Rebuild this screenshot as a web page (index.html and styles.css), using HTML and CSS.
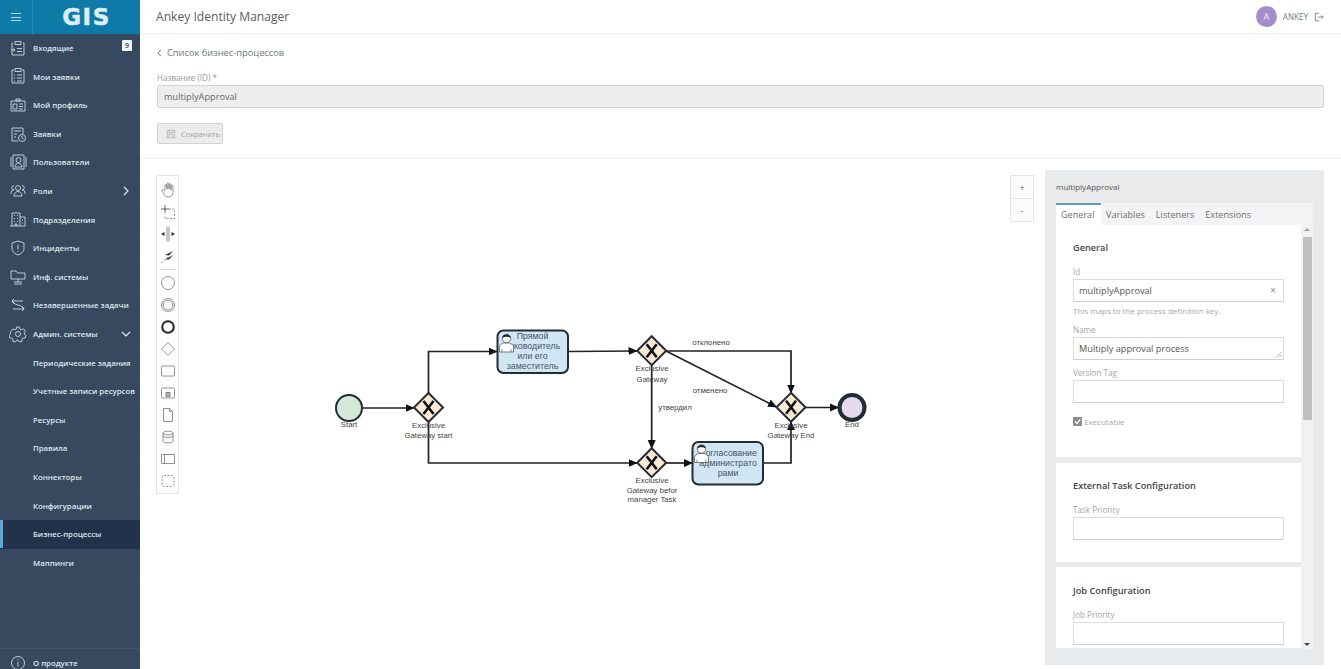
FILE: index.html
```html
<!DOCTYPE html>
<html lang="ru">
<head>
<meta charset="utf-8">
<title>Ankey Identity Manager</title>
<link rel="stylesheet" href="styles.css">
</head>
<body>
<div class="app">
  <aside class="sidebar">
    <div class="brand">
      <div class="burger"><span></span><span></span><span></span></div>
      <div class="logo">GIS</div>
    </div>
    <nav class="nav">
      <a class="item"><svg class="ico" viewBox="0 0 18 18"><path d="M4 4H3v12h12V4h-1M6 2.500h6v3H6zM8 9.500h5M8 12.500h5M2 11h4M4.500 9.500 6 11l-1.500 1.500"/></svg><span>Входящие</span><b class="badge">9</b></a>
      <a class="item"><svg class="ico" viewBox="0 0 18 18"><path d="M5 3H3v13h12V3h-2M6 1.500h6v3H6zM8 8h5M8 11h5M8 14h5M5 8h1M5 11h1M5 14h1"/></svg><span>Мои заявки</span></a>
      <a class="item"><svg class="ico" viewBox="0 0 18 18"><path d="M2 5h14v10H2zM7 3h4v2H7zM4 8h4v5H4zM10 8h4M10 10.500h4M10 13h4"/></svg><span>Мой профиль</span></a>
      <a class="item"><svg class="ico" viewBox="0 0 18 18"><path d="M9 16H3V3h11v6M5 6h7M5 9h3M5 12h2"/><circle cx="13" cy="13" r="3.500"/><path d="M13 11v2l1.500 1"/></svg><span>Заявки</span></a>
      <a class="item"><svg class="ico" viewBox="0 0 18 18"><path d="M4 2h11v14H4zM2 4v10M17 4v10"/><circle cx="9.500" cy="7" r="2.500"/><path d="M6 14c0-5 7-5 7 0z"/></svg><span>Пользователи</span></a>
      <a class="item"><svg class="ico" viewBox="0 0 18 18"><circle cx="9" cy="6" r="2.500"/><path d="M5 14c0-6 8-6 8 0zM5 3.500a2.200 2.200 0 0 0 0 4.500M2 12c0-3 1-4 3-4M13 3.500a2.200 2.200 0 0 1 0 4.500M16 12c0-3-1-4-3-4"/></svg><span>Роли</span><svg class="chev" viewBox="0 0 10 10"><path d="M3 1l4 4-4 4"/></svg></a>
      <a class="item"><svg class="ico" viewBox="0 0 18 18"><path d="M3 16V3h8v13M11 7h5v9H1M5 5.500h1M8 5.500h1M5 8.500h1M8 8.500h1M5 11.500h1M8 11.500h1M6 16v-2h2v2M13 10h1M13 13h1"/></svg><span>Подразделения</span></a>
      <a class="item"><svg class="ico" viewBox="0 0 18 18"><path d="M9 2l6 2v5c0 4-3 6-6 7-3-1-6-3-6-7V4zM9 5.500v5M9 12v1"/></svg><span>Инциденты</span></a>
      <a class="item"><svg class="ico" viewBox="0 0 18 18"><path d="M2 11V3h5l1.500 2H16v6zM9 11v3M5 16h8M5 14h8"/></svg><span>Инф. системы</span></a>
      <a class="item"><svg class="ico" viewBox="0 0 18 18"><path d="M3 5h11M3 5l2-2M3 5l2 2M15 13H4M15 13l-2-2M15 13l-2 2M3 5c0 4 12 4 12 8"/></svg><span>Незавершенные задачи</span></a>
      <a class="item"><svg class="ico" viewBox="0 0 18 18"><circle cx="9" cy="9" r="2.500"/><path d="M7.500 2h3l.4 2 1.700.8 1.800-1 2 2.300-1.200 1.700.3 1.500 1.500 1-1 2.700-2 .0-1.200 1.300.2 2-2.800.6-1-1.700h-1.600l-1 1.700-2.800-.6.2-2-1.200-1.300-2 0-1-2.700 1.500-1 .3-1.500L2 6.100l2-2.300 1.800 1 1.700-.8z"/></svg><span>Админ. системы</span><svg class="chev" viewBox="0 0 10 10"><path d="M1 3l4 4 4-4"/></svg></a>
      <a class="item"><span>Периодические задания</span></a>
      <a class="item"><span>Учетные записи ресурсов</span></a>
      <a class="item"><span>Ресурсы</span></a>
      <a class="item"><span>Правила</span></a>
      <a class="item"><span>Коннекторы</span></a>
      <a class="item"><span>Конфигурации</span></a>
      <a class="item active"><span>Бизнес-процессы</span></a>
      <a class="item"><span>Маппинги</span></a>
    </nav>
    <div class="about">
      <svg class="ico" viewBox="0 0 18 18"><circle cx="9" cy="9" r="6.500"/><path d="M9 8v4.500M9 5.500v1"/></svg><span>О продукте</span>
    </div>
  </aside>

  <main class="main">
    <header class="topbar">
      <h1 class="title">Ankey Identity Manager</h1>
      <div class="user">
        <span class="avatar">A</span>
        <span class="uname">ANKEY</span>
        <svg class="logout" viewBox="0 0 12 12"><path d="M6 1.500H1.500v9H6M5 6h6M9 4l2 2-2 2"/></svg>
      </div>
    </header>

    <section class="form">
      <a class="back"><svg class="back-ico" viewBox="0 0 6 10"><path d="M5 1 1 5l4 4"/></svg>Список бизнес-процессов</a>
      <label class="flabel">Название (ID) *</label>
      <div class="ro-input">multiplyApproval</div>
      <button class="save"><svg class="save-ico" viewBox="0 0 12 12"><path d="M1.500 1.500h9v9h-9zM3.500 1.500v3h5v-3M3.500 10.500v-4h5v4"/></svg>Сохранить</button>
    </section>

    <section class="workspace">
      <svg class="diagram" width="905" height="510" viewBox="140 159 905 510">
        <defs>
          <marker id="arr" markerWidth="9" markerHeight="9" refX="8.500" refY="4.500" orient="auto" markerUnits="userSpaceOnUse" viewBox="0 0 9 9">
            <path d="M0 .5 9 4.500 0 8.500z" fill="#111"/>
          </marker>
          <g id="gw">
            <path d="M0-14.500 14.500 0 0 14.500-14.500 0z" fill="#fbe9d5" stroke="#232c33" stroke-width="2"/>
            <path d="M-5-6.500 5 6.500M5-6.500-5 6.500" stroke="#111" stroke-width="2.600" fill="none"/>
          </g>
          <g id="usr">
            <path d="M-7 9.500v-5c0-2 2.500-3.500 4-4h6c1.500.5 4 2 4 4v5z" fill="#fff" stroke="#444" stroke-width=".7"/>
            <path d="M-4.500 9.500v-3M4.500 9.500v-3" stroke="#444" stroke-width=".6" fill="none"/>
            <circle cx="0" cy="-4" r="4.200" fill="#fff" stroke="#444" stroke-width=".7"/>
            <path d="M-4.200-4.500c0-4.600 8.400-4.600 8.400 0-2.300-1.700-6-1.700-8.400 0z" fill="#222"/>
          </g>
        </defs>
        <g class="flows">
          <path d="M362 408H414" marker-end="url(#arr)"/>
          <path d="M428.500 393V351.500H497" marker-end="url(#arr)"/>
          <path d="M428.500 422V463H637" marker-end="url(#arr)"/>
          <path d="M568 351.500 637 351" marker-end="url(#arr)"/>
          <path d="M666 351H791V393" marker-end="url(#arr)"/>
          <path d="M666 351 776.500 407" marker-end="url(#arr)"/>
          <path d="M651.700 365V448.500" marker-end="url(#arr)"/>
          <path d="M666 463H692.500" marker-end="url(#arr)"/>
          <path d="M763 463H791V421.500" marker-end="url(#arr)"/>
          <path d="M805 407.500H838.500" marker-end="url(#arr)"/>
        </g>
        <circle cx="349" cy="408" r="13" fill="#d3e9da" stroke="#232c33" stroke-width="2"/>
        <circle cx="852" cy="407.500" r="12.500" fill="#e6d8ee" stroke="#232c33" stroke-width="4"/>
        <use href="#gw" x="428.500" y="407.500"/>
        <use href="#gw" x="651.700" y="350.700"/>
        <use href="#gw" x="651.700" y="462.700"/>
        <use href="#gw" x="791" y="407.300"/>
        <rect x="497.500" y="330.500" width="70.500" height="42.500" rx="6" fill="#d0e6f5" stroke="#232c33" stroke-width="2"/>
        <rect x="692.500" y="442" width="70.500" height="42.500" rx="6" fill="#d0e6f5" stroke="#232c33" stroke-width="2"/>
        <g class="lbl">
          <text x="349" y="427">Start</text>
          <text x="852" y="427">End</text>
          <text x="428.500" y="428">Exclusive</text>
          <text x="428.500" y="438">Gateway start</text>
          <text x="652" y="371">Exclusive</text>
          <text x="652" y="382">Gateway</text>
          <text x="652" y="483">Exclusive</text>
          <text x="652" y="493">Gateway befor</text>
          <text x="652" y="502">manager Task</text>
          <text x="791" y="428">Exclusive</text>
          <text x="791" y="438">Gateway End</text>
          <text x="711" y="345">отклонено</text>
          <text x="710" y="393">отменено</text>
          <text x="675" y="410">утвердил</text>
        </g>
        <g class="lbl task">
          <text x="532.500" y="339">Прямой</text>
          <text x="532.500" y="349">руководитель</text>
          <text x="532.500" y="359">или его</text>
          <text x="532.500" y="369">заместитель</text>
          <text x="728" y="456">Согласование</text>
          <text x="728" y="466">администрато</text>
          <text x="728" y="476">рами</text>
        </g>
        <use href="#usr" x="506.500" y="342.500"/>
        <use href="#usr" x="701.500" y="453"/>
      </svg>

      <div class="palette">
        <span class="tool"><svg viewBox="0 0 18 18"><path d="M6 9V4.500a1 1 0 0 1 2 0V8M8 8V3a1 1 0 0 1 2 0v5M10 8V3.800a1 1 0 0 1 2 0V9M12 9V5.500a1 1 0 0 1 2 0V11c0 3-2 5-4.500 5S6 15 5 13L3 10c-.5-1 1-2 2-1l1 1.500"/></svg></span>
        <span class="tool"><svg viewBox="0 0 18 18"><path class="dark" d="M6 2v8M2 6h8"/><path class="dash" d="M10 6h5.500v9.500H6v-4"/></svg></span>
        <span class="tool"><svg viewBox="0 0 18 18"><path d="M8 1.500v15M10 1.500v15"/><path class="fillb" d="M2 9 5.500 7v4zM16 9l-3.500-2v4z"/></svg></span>
        <span class="tool"><svg viewBox="0 0 18 18"><path class="dash" d="M2 16 9 10"/><path class="fillb" d="M6 8l8-4-4 4.500zM6 12.500l8-4.500-4 4.500z"/></svg></span>
        <span class="tool-sep"></span>
        <span class="tool"><svg viewBox="0 0 18 18"><circle cx="9" cy="9" r="6.500"/></svg></span>
        <span class="tool"><svg viewBox="0 0 18 18"><circle cx="9" cy="9" r="6.500"/><circle cx="9" cy="9" r="4.800"/></svg></span>
        <span class="tool"><svg viewBox="0 0 18 18"><circle class="bold" cx="9" cy="9" r="5.800"/></svg></span>
        <span class="tool"><svg viewBox="0 0 18 18"><path d="M9 2.500 15.500 9 9 15.500 2.500 9z"/></svg></span>
        <span class="tool"><svg viewBox="0 0 18 18"><rect x="2.500" y="4" width="13" height="10" rx="1.500"/></svg></span>
        <span class="tool"><svg viewBox="0 0 18 18"><rect x="2.500" y="4" width="13" height="10" rx="1.500"/><rect x="7" y="8.500" width="4" height="4" fill="#bbb"/></svg></span>
        <span class="tool"><svg viewBox="0 0 18 18"><path d="M4.500 2.500h6l3 3v10h-9zM10.500 2.500v3h3"/></svg></span>
        <span class="tool"><svg viewBox="0 0 18 18"><path d="M4 5c0-2.500 10-2.500 10 0v8c0 2.500-10 2.500-10 0zM4 5c0 2.500 10 2.500 10 0M4 7.500c0 2.500 10 2.500 10 0"/></svg></span>
        <span class="tool"><svg viewBox="0 0 18 18"><path d="M2.500 4.500h13v9h-13zM5.500 4.500v9"/></svg></span>
        <span class="tool"><svg viewBox="0 0 18 18"><rect class="dash" x="3" y="3.500" width="12" height="11" rx="2"/></svg></span>
      </div>

      <div class="zoomer">
        <button class="zbtn">+</button>
        <button class="zbtn">-</button>
      </div>

      <aside class="props">
        <div class="props-title">multiplyApproval</div>
        <div class="tabs">
          <span class="tab on">General</span>
          <span class="tab">Variables</span>
          <span class="tab">Listeners</span>
          <span class="tab">Extensions</span>
        </div>
        <div class="props-body">
          <div class="cards">
            <div class="card first">
              <h3>General</h3>
              <label>Id</label>
              <div class="field has-x">multiplyApproval<i class="clear">×</i></div>
              <p class="hint">This maps to the process definition key.</p>
              <label>Name</label>
              <div class="field has-grip">Multiply approval process<svg class="grip" viewBox="0 0 7 7"><path d="M1 6.500 6.500 1M4 6.500 6.500 4"/></svg></div>
              <label>Version Tag</label>
              <div class="field"></div>
              <div class="check"><svg class="box" viewBox="0 0 9 9"><rect width="9" height="9" rx="1" fill="#8b8b8b"/><path d="M2 4.500 4 6.500 7.200 2.500" stroke="#fff" stroke-width="1.400" fill="none"/></svg>Executable</div>
            </div>
            <div class="card second">
              <h3>External Task Configuration</h3>
              <label>Task Priority</label>
              <div class="field"></div>
            </div>
            <div class="card third">
              <h3>Job Configuration</h3>
              <label>Job Priority</label>
              <div class="field"></div>
            </div>
          </div>
          <div class="sbar">
            <i class="up"></i>
            <i class="thumb"></i>
            <i class="down"></i>
          </div>
        </div>
      </aside>
    </section>
  </main>
</div>
</body>
</html>
```
FILE: styles.css
```css
* { box-sizing: border-box; }
html, body { margin: 0; height: 100%; overflow: hidden; background: #fff; }
body { font-family: "Open Sans", "Noto Sans", sans-serif; color: #555; }
.app { display: flex; width: 1341px; height: 669px; }

/* Sidebar */
.sidebar { width: 140px; flex: none; background: #36495f; display: flex; flex-direction: column; }
.brand { height: 34px; flex: none; background: #0f7aa8; display: flex; align-items: center; position: relative; }
.burger { width: 33px; height: 33px; border-right: 1px solid #2a8cb4; display: flex; flex-direction: column; justify-content: center; align-items: center; gap: 2.500px; flex: none; }
.burger span { width: 10px; height: 1px; background: #b9dbe8; }
.logo { flex: 1; text-align: center; font-family: "DejaVu Sans", sans-serif; font-weight: 700; font-size: 23px; letter-spacing: 1.500px; color: #d9eef5; -webkit-text-stroke: .5px #d9eef5; line-height: 33px; }
.nav { flex: 1; }
.item { height: 28.600px; display: flex; align-items: center; padding: .5px 0 0 33px; position: relative; font-size: 7.800px; font-weight: 600; color: #dfe6ee; white-space: nowrap; border-bottom: 1px solid #3a4e65; }
.ico { position: absolute; left: 9px; top: 50%; margin-top: -9px; width: 18px; height: 18px; fill: none; stroke: #cfd8e2; stroke-width: .9; }
.badge { position: absolute; left: 122px; top: 6px; width: 10px; height: 11px; background: #f3f5f7; color: #36495f; font-size: 7.500px; font-weight: 600; text-align: center; line-height: 11px; border-radius: 1px; }
.chev { position: absolute; left: 121px; top: 50%; margin-top: -5px; width: 10px; height: 10px; fill: none; stroke: #dfe6ee; stroke-width: 1.200; }
.item.active { background: #22324a; border-bottom-color: #22324a; }
.item.active::before { content: ""; position: absolute; left: 0; top: 0; bottom: 0; width: 3px; background: #5aa8dc; }
.about { height: 21px; flex: none; border-top: 1px solid #3f546b; display: flex; align-items: center; padding: 7px 0 0 33px; position: relative; font-size: 7.800px; font-weight: 600; color: #dfe6ee; }
.about .ico { margin-top: -5.500px; }

/* Main */
.main { flex: 1; min-width: 0; display: flex; flex-direction: column; }
.topbar { height: 34px; flex: none; display: flex; align-items: center; justify-content: space-between; padding: 0 17px 0 16px; border-bottom: 1px solid #eceef0; }
.title { margin: 0; font-size: 12.100px; font-weight: 400; color: #5c5c5c; }
.user { display: flex; align-items: center; }
.avatar { width: 21px; height: 21px; border-radius: 50%; background: #a58ccb; color: #f4eff9; font-size: 9px; display: flex; align-items: center; justify-content: center; margin-right: 6px; }
.uname { font-size: 8.100px; color: #6f7c88; margin-right: 6px; }
.logout { width: 10px; height: 10px; fill: none; stroke: #5d6a75; stroke-width: .9; }

.form { height: 125px; flex: none; padding: 13px 17px 0 17px; border-bottom: 1px solid #eceef0; display: flex; flex-direction: column; align-items: flex-start; }
.back { font-size: 9.300px; color: #6d7680; line-height: 12px; display: flex; align-items: center; height: 12px; }
.back-ico { width: 5px; height: 8px; fill: none; stroke: #5f6973; stroke-width: 1.100; margin-right: 5px; }
.flabel { margin-top: 13px; font-size: 8.100px; color: #9a9a9a; line-height: 12px; }
.ro-input { margin-top: 1px; width: 100%; height: 23px; background: #eee; border: 1px solid #d4d4d4; border-radius: 2px; padding-left: 6px; font-size: 9.200px; line-height: 21px; color: #666; }
.save { margin-top: 15px; width: 66px; height: 21px; background: #ececec; border: 1px solid #d2d2d2; border-radius: 2px; font-family: inherit; font-size: 7.400px; color: #a2a2a2; padding: 0 0 0 8px; display: flex; align-items: center; }
.save-ico { width: 10px; height: 10px; fill: none; stroke: #a8a8a8; stroke-width: .8; margin-right: 5px; }

/* Workspace */
.workspace { flex: 1; position: relative; min-height: 0; overflow: hidden; }
.diagram { position: absolute; left: 0; top: 0; }
.flows path { fill: none; stroke: #222; stroke-width: 1.700; }
.lbl text { font-family: "Liberation Sans", Arial, sans-serif; font-size: 7.800px; fill: #444; text-anchor: middle; }
.lbl.task text { font-size: 8.800px; fill: #4a5560; }
.palette { position: absolute; left: 16px; top: 16px; width: 23px; height: 319px; border: 1px solid #e3e3e3; background: #fdfdfd; padding-top: 3px; display: flex; flex-direction: column; align-items: center; }
.tool { width: 18px; height: 22px; flex: none; display: flex; align-items: center; }
.tool svg { width: 18px; height: 18px; fill: none; stroke: #666; stroke-width: .7; }
.tool svg .bold { stroke: #222; stroke-width: 2; }
.tool svg .dark { stroke: #222; }
.tool svg .dash { stroke-dasharray: 2 1.500; }
.tool svg .fillb { fill: #333; stroke: none; }
.tool-sep { width: 15px; height: 1px; background: #d5d5d5; margin: 1.500px 0 2.500px; flex: none; }
.zoomer { position: absolute; left: 870px; top: 16px; width: 24px; height: 47px; border: 1px solid #dfe7ef; display: flex; flex-direction: column; background: #fbfcfd; }
.zbtn { flex: 1; background: none; border: 0; padding: 0; font-family: inherit; font-size: 9px; color: #666; }
.zbtn + .zbtn { border-top: 1px solid #e4e4e4; }

/* Properties */
.props { position: absolute; left: 905px; top: 11px; width: 279px; height: 495px; background: #e9eaec; padding: 0 11px; display: flex; flex-direction: column; }
.props-title { height: 33px; flex: none; font-size: 8px; color: #555; line-height: 34px; }
.tabs { height: 22px; flex: none; display: flex; background: #f3f4f5; font-size: 9.100px; color: #6f6f6f; width: 257px; }
.tab { padding: 0 6px 0 5px; line-height: 23px; }
.tab.on { background: #fff; border-top: 2px solid #5f9dbd; line-height: 19px; width: 45px; }
.props-body { display: flex; width: 257px; height: 424px; flex: none; overflow: hidden; }
.cards { width: 245px; flex: none; }
.card { background: #fff; padding: 0 17px; margin-bottom: 5.500px; overflow: hidden; }
.card.first { height: 232px; }
.card.second { height: 99px; }
.card.third { height: 81px; margin-bottom: 0; }
.card h3 { margin: 16px 0 0; font-size: 9.200px; line-height: 13px; font-weight: 600; color: #444; }
.card.second h3, .card.third h3 { margin-top: 16.500px; }
.card label { display: block; font-size: 8.100px; line-height: 12px; color: #a5a5a5; margin-top: 12px; }
.card.second label, .card.third label { margin-top: 12px; }
.field { height: 23px; margin-top: 1px; border: 1px solid #dcdcdc; border-bottom-color: #cfcfcf; font-size: 9.200px; line-height: 21px; color: #555; padding-left: 5px; position: relative; width: 211px; }
.clear { position: absolute; right: 7px; top: 0; font-style: normal; color: #888; font-size: 10px; }
.grip { position: absolute; right: 1px; bottom: 1px; width: 7px; height: 7px; fill: none; stroke: #777; stroke-width: .6; }
.hint { margin: 3px 0 0; font-size: 8px; line-height: 12px; color: #a8a8a8; }
.card .hint + label { margin-top: 7px; }
.card .has-grip + label { margin-top: 7px; }
.check { display: flex; align-items: center; font-size: 8px; color: #a5a5a5; margin-top: 13px; height: 10px; }
.box { width: 9px; height: 9px; margin-right: 2px; }
.sbar { width: 12px; flex: none; background: #f1f1f1; position: relative; }
.thumb { position: absolute; left: 2px; top: 12px; width: 9px; height: 183px; background: #c1c1c1; }
.up, .down { position: absolute; left: 3px; border: 3px solid transparent; width: 0; height: 0; }
.up { top: 0; border-bottom-color: #a3a3a3; }
.down { bottom: 0; border-top-color: #444; }
```
